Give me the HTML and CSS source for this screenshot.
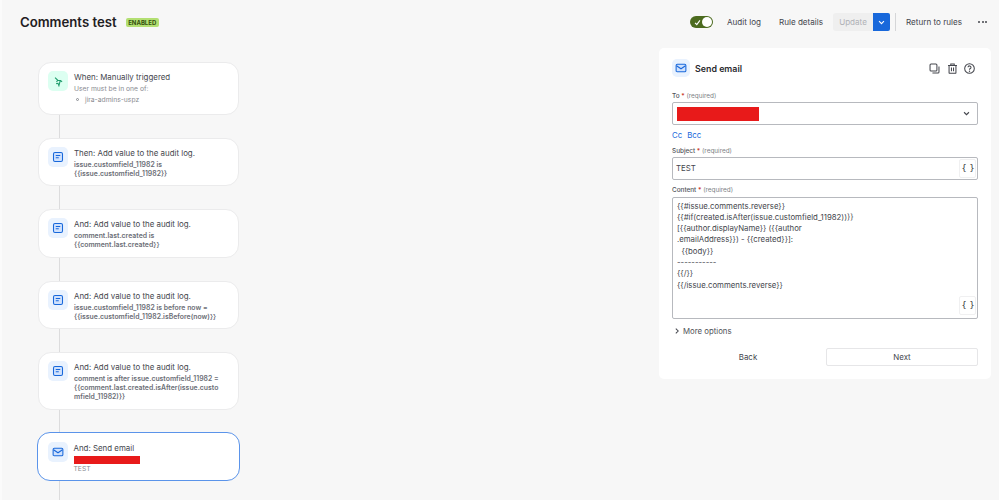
FILE: index.html
```html
<!DOCTYPE html>
<html lang="en">
<head>
<meta charset="utf-8">
<title>Comments test</title>
<link rel="stylesheet" href="styles.css">
</head>
<body>
<div class="page">
  <header class="topbar">
    <div class="title-group">
      <h1 class="title">Comments test</h1>
      <span class="lozenge">ENABLED</span>
    </div>
    <div class="actions">
      <span class="toggle">
        <svg class="toggle-check" viewBox="0 0 10 10" width="7" height="7"><path d="M1.5 5.5 4 8l4.5-6" fill="none" stroke="#fff" stroke-width="1.6"/></svg>
        <span class="toggle-knob"></span>
      </span>
      <span class="action audit">Audit log</span>
      <span class="action details">Rule details</span>
      <span class="update-group">
        <span class="update">Update</span>
        <span class="update-arrow"><svg viewBox="0 0 10 10" width="7" height="7"><path d="M1.5 3.2 5 6.7l3.5-3.5" fill="none" stroke="#fff" stroke-width="1.5"/></svg></span>
      </span>
      <span class="divider"></span>
      <span class="action return">Return to rules</span>
      <span class="more"><i></i><i></i><i></i></span>
    </div>
  </header>

  <main class="content">
    <section class="flow">
      <article class="card card-h53">
        <span class="icon icon-green">
          <svg viewBox="0 0 16 16" width="11" height="11"><path d="M3 2.5 7 6.2 5 8.4M7 6.2l3.6.2L8.6 14l-1.4-3.4-2.6.5M10.6 6.4l2.6 2" fill="none" stroke="#1f9d6c" stroke-width="1.6"/></svg>
        </span>
        <div class="card-text">
          <div class="card-title">When: Manually triggered</div>
          <div class="card-sub">User must be in one of:</div>
          <div class="card-bullet"><i></i>jira-admins-uspz</div>
        </div>
      </article>
      <div class="line line-23"></div>
      <article class="card card-h48">
        <span class="icon"><svg viewBox="0 0 16 16" width="12" height="12"><use href="#log"/></svg></span>
        <div class="card-text">
          <div class="card-title">Then: Add value to the audit log.</div>
          <div class="card-desc">issue.customfield_11982 is<br>{{issue.customfield_11982}}</div>
        </div>
      </article>
      <div class="line line-23"></div>
      <article class="card card-h49">
        <span class="icon"><svg viewBox="0 0 16 16" width="12" height="12"><use href="#log"/></svg></span>
        <div class="card-text">
          <div class="card-title">And: Add value to the audit log.</div>
          <div class="card-desc">comment.last.created is<br>{{comment.last.created}}</div>
        </div>
      </article>
      <div class="line line-23"></div>
      <article class="card card-h48">
        <span class="icon"><svg viewBox="0 0 16 16" width="12" height="12"><use href="#log"/></svg></span>
        <div class="card-text">
          <div class="card-title">And: Add value to the audit log.</div>
          <div class="card-desc">issue.customfield_11982 is before now =<br>{{issue.customfield_11982.isBefore(now)}}</div>
        </div>
      </article>
      <div class="line line-23"></div>
      <article class="card card-h58">
        <span class="icon"><svg viewBox="0 0 16 16" width="12" height="12"><use href="#log"/></svg></span>
        <div class="card-text">
          <div class="card-title">And: Add value to the audit log.</div>
          <div class="card-desc">comment is after issue.customfield_11982 =<br>{{comment.last.created.isAfter(issue.custo<br>mfield_11982)}}</div>
        </div>
      </article>
      <div class="line line-22"></div>
      <article class="card card-h49 card-active">
        <span class="icon"><svg viewBox="0 0 16 16" width="12" height="12"><use href="#mail"/></svg></span>
        <div class="card-text">
          <div class="card-title">And: Send email</div>
          <div class="redact redact-card"></div>
          <div class="card-test">TEST</div>
        </div>
      </article>
      <div class="line line-rest"></div>
    </section>

    <aside class="panel">
      <div class="panel-head">
        <span class="icon icon-panel"><svg viewBox="0 0 16 16" width="12" height="12"><use href="#mail"/></svg></span>
        <h2 class="panel-title">Send email</h2>
        <div class="panel-tools">
          <svg viewBox="0 0 16 16" width="11" height="11"><rect x="1.5" y="1.5" width="10" height="10" rx="1.5" fill="none" stroke="#44464d" stroke-width="1.5"/><path d="M14.5 5v8a1.5 1.5 0 0 1-1.5 1.5H5" fill="none" stroke="#44464d" stroke-width="1.5"/></svg>
          <svg viewBox="0 0 16 16" width="11" height="11"><path d="M1.5 3.5h13M5.5 3.5V1.5h5v2M3 3.5V14a1 1 0 0 0 1 1h8a1 1 0 0 0 1-1V3.5M6.5 6.5v5.5M9.5 6.5v5.5" fill="none" stroke="#44464d" stroke-width="1.5"/></svg>
          <svg viewBox="0 0 16 16" width="11" height="11"><circle cx="8" cy="8" r="7" fill="none" stroke="#44464d" stroke-width="1.5"/><path d="M5.8 6.2A2.2 2.2 0 1 1 8 8.6v1.2" fill="none" stroke="#44464d" stroke-width="1.5"/><circle cx="8" cy="12" r="1" fill="#44464d"/></svg>
        </div>
      </div>

      <div class="label label-to">To <b>*</b> <span>(required)</span></div>
      <div class="field field-select">
        <div class="redact redact-field"></div>
        <svg viewBox="0 0 10 10" width="7" height="7"><path d="M1.5 3.2 5 6.7l3.5-3.5" fill="none" stroke="#44464d" stroke-width="1.6"/></svg>
      </div>
      <div class="links"><a>Cc</a><a>Bcc</a></div>

      <div class="label label-subject">Subject <b>*</b> <span>(required)</span></div>
      <div class="field field-subject">
        <span>TEST</span>
        <span class="braces">{ }</span>
      </div>

      <div class="label label-content">Content <b>*</b> <span>(required)</span></div>
      <div class="field field-content">
        <div class="code">{{#issue.comments.reverse}}
{{#if(created.isAfter(issue.customfield_11982))}}
[{{author.displayName}} ({{author
.emailAddress}}) - {{created}}]:
  {{body}}
-----------
{{/}}
{{/issue.comments.reverse}}</div>
        <span class="braces braces-corner">{ }</span>
      </div>

      <div class="more-options">
        <svg viewBox="0 0 10 10" width="6" height="6"><path d="M3 1 7 5 3 9" fill="none" stroke="#44464d" stroke-width="1.7"/></svg>
        More options
      </div>

      <div class="panel-buttons">
        <span class="btn">Back</span>
        <span class="btn btn-next">Next</span>
      </div>
    </aside>
  </main>
</div>

<svg class="defs" width="0" height="0" aria-hidden="true">
  <symbol id="log" viewBox="0 0 16 16">
    <rect x="2" y="2" width="12" height="12" rx="2" fill="#cfe1fd" stroke="#1868db" stroke-width="1.4"/>
    <path d="M5 6h6M5 9h4" stroke="#1868db" stroke-width="1.4" fill="none"/>
  </symbol>
  <symbol id="mail" viewBox="0 0 16 16">
    <rect x="1.5" y="3" width="13" height="10" rx="1.5" fill="#cfe1fd" stroke="#1868db" stroke-width="1.4"/>
    <path d="M2 5l6 4 6-4" stroke="#1868db" stroke-width="1.4" fill="none"/>
  </symbol>
</svg>
</body>
</html>
```
FILE: styles.css
```css
* { box-sizing: border-box; }
html, body { margin: 0; height: 100%; }
body {
  font-family: Inter, "Liberation Sans", sans-serif;
  background: #f7f7f7;
  color: #292a2e;
  overflow: hidden;
}
.page { width: 999px; height: 500px; overflow: hidden; border-left: 2px solid #fbfbfb; }
.defs { display: block; height: 0; }

.topbar {
  height: 48px;
  display: flex;
  justify-content: space-between;
  align-items: flex-start;
  padding: 13px 12px 0 18px;
}
.title-group { display: flex; align-items: center; gap: 9px; height: 18px; }
.title { margin: 0; font-size: 13.2px; font-weight: 600; color: #1f2023; line-height: 18px; }
.lozenge {
  background: #b3df72; color: #33500f; font-size: 6px; font-weight: 700;
  height: 9px; line-height: 9px; padding: 0 2.5px; border-radius: 2px;
}
.actions { display: flex; align-items: center; height: 18px; font-size: 8.1px; color: #44464d; }
.toggle {
  width: 23px; height: 12px; border-radius: 6px; background: #4c6b1f;
  display: flex; align-items: center; justify-content: space-between; padding: 0 1px 0 4px;
}
.toggle-knob { width: 10px; height: 10px; border-radius: 50%; background: #fff; }
.action { white-space: nowrap; }
.audit { margin-left: 14px; }
.details { margin-left: 18px; }
.update-group { display: flex; margin-left: 10px; height: 18px; }
.update {
  width: 40px; background: #efefef; color: #b0b2b7; line-height: 18px; text-align: center;
  border-radius: 3px 0 0 3px;
}
.update-arrow {
  width: 17px; background: #1868db; display: flex; align-items: center; justify-content: center;
  border-radius: 0 2px 2px 0;
}
.divider { width: 1px; height: 18px; background: #d5d6d8; margin: 0 10px 0 5px; }
.more { display: flex; gap: 1.5px; margin-left: 16px; }
.more i { width: 2px; height: 2px; border-radius: 50%; background: #44464d; }

.content { display: flex; justify-content: space-between; align-items: flex-start; padding-left: 36px; padding-right: 8px; }

.flow { width: 201px; padding-top: 14px; display: flex; flex-direction: column; }
.card {
  background: #fff;
  border: 1px solid #ebebec;
  border-radius: 13px;
  padding: 8px 8px 0 9px;
  display: flex;
  gap: 6px;
}
.card-h53 { height: 53px; }
.card-h48 { height: 48px; }
.card-h49 { height: 49px; }
.card-h58 { height: 58px; }
.card-active { border: 1.5px solid #5b94ea; width: 203px; margin-left: -1px; padding: 8.5px 8px 0 9.5px; }
.line { width: 1.5px; background: #dcdcdd; margin-left: 20.5px; }
.line-23 { height: 23px; }
.line-22 { height: 22px; }
.line-rest { height: 40px; }
.icon {
  width: 20px; height: 20px; flex: none; border-radius: 5px; background: #e9f2fe;
  display: flex; align-items: center; justify-content: center;
}
.icon-green { background: #dcfff1; }
.card-text { min-width: 0; padding-top: 1px; }
.card-title { font-size: 7.9px; line-height: 11px; color: #44464d; white-space: nowrap; }
.card-sub { font-size: 6.75px; line-height: 11px; color: #8a8c92; }
.card-bullet { font-size: 6.75px; line-height: 11px; color: #8a8c92; display: flex; align-items: center; padding-left: 2px; gap: 6px; }
.card-bullet i { width: 3px; height: 3px; border: .7px solid #8a8c92; border-radius: 50%; }
.card-desc { font-size: 6.88px; line-height: 9px; font-weight: 600; color: #6b6e76; margin-top: 1px; white-space: nowrap; }
.card-test { font-size: 6.75px; line-height: 9px; color: #8a8c92; }
.redact { background: #e81a1a; }
.redact-card { width: 66px; height: 8px; margin-top: 2px; }

.panel {
  width: 332px; height: 331px; background: #fff; border-radius: 5px; padding: 11px 14px 0 13px;
}
.panel-head { display: flex; align-items: center; height: 18px; }
.icon-panel { width: 18px; height: 18px; }
.panel-title { margin: 0 0 0 5px; font-size: 8.85px; font-weight: 600; color: #292a2e; }
.panel-tools { margin-left: auto; margin-right: 2px; display: flex; gap: 6.5px; align-items: center; }
.label { font-size: 6.4px; line-height: 9px; color: #505258; font-weight: 500; }
.label b { color: #c9372c; font-weight: 600; }
.label span { color: #7d7f86; font-weight: 400; }
.label-to { margin-top: 14.5px; }
.field {
  width: 306px; background: #fff; border: 1px solid #b7b9be; border-radius: 2px; font-size: 7.8px; color: #44464d;
}
.field-select { height: 23px; margin-top: 1.5px; display: flex; align-items: center; justify-content: space-between; padding: 0 7px 0 4px; }
.redact-field { width: 82px; height: 14px; }
.links { display: flex; gap: 5px; font-size: 7.8px; line-height: 11px; color: #1868db; margin-top: 5px; }
.label-subject { margin-top: 5.5px; }
.field-subject { height: 23px; margin-top: 1px; display: flex; align-items: center; justify-content: space-between; padding: 0 1px 0 3px; }
.braces {
  width: 17px; height: 19px; background: #fff; border: 1px solid #f0f0f1; border-radius: 2px;
  font-family: "DejaVu Sans Mono", monospace; font-size: 8.4px; font-weight: 400; color: #292a2e;
  display: flex; align-items: center; justify-content: center; letter-spacing: -1px;
}
.label-content { margin-top: 6px; }
.field-content { height: 122px; margin-top: 2px; padding: 3px 4px; display: flex; flex-direction: column; justify-content: space-between; }
.code { white-space: pre; font-size: 7.8px; line-height: 11.3px; color: #44464d; }
.braces-corner { align-self: flex-end; margin: 0 -3px 0 0; }
.more-options { display: flex; align-items: center; gap: 3px; margin-top: 7px; margin-left: 2px; font-size: 7.8px; line-height: 11px; color: #505258; }
.panel-buttons { display: flex; justify-content: space-between; margin-top: 11px; width: 306px; }
.btn { width: 152px; height: 18px; line-height: 17px; text-align: center; font-size: 7.9px; color: #44464d; border: 1px solid transparent; border-radius: 2px; }
.btn-next { border-color: #e6e6e8; }
```
